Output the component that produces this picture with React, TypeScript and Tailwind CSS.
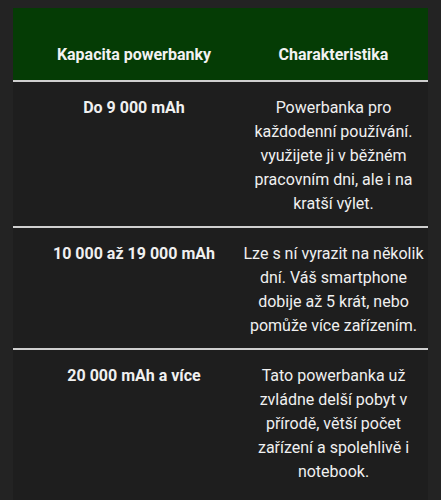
import React from "react";

const rows = [
  {
    cap: "Do 9 000 mAh",
    desc: ["Powerbanka pro", "každodenní používání.", "využijete ji v běžném", "pracovním dni, ale i na", "kratší výlet."],
  },
  {
    cap: "10 000 až 19 000 mAh",
    desc: ["Lze s ní vyrazit na několik", "dní. Váš smartphone", "dobije až 5 krát, nebo", "pomůže více zařízením."],
  },
  {
    cap: "20 000 mAh a více",
    desc: ["Tato powerbanka už", "zvládne delší pobyt v", "přírodě, větší počet", "zařízení a spolehlivě i", "notebook."],
  },
];

export default function App() {
  return (
    <div
      className="w-[441px] h-[500px] overflow-hidden bg-[#232323] pt-[8px] px-[13px]"
      style={{ fontFamily: "Roboto, 'Noto Sans', sans-serif" }}
    >
      <div className="w-[415px] bg-[#1e1e1e] text-[16px] leading-[24px] text-[#f0f0f0]">
        <div className="grid grid-cols-[230px_185px] bg-[#053c05] border-b-2 border-[#cfcfcf] pt-[35px] pb-[13px] font-bold text-[#f2f2f2]">
          <div className="text-center pl-[12px]">Kapacita powerbanky</div>
          <div className="text-center pr-[4px]">Charakteristika</div>
        </div>
        {rows.map((r, i) => (
          <div
            key={i}
            className={
              i < rows.length - 1
                ? "grid grid-cols-[230px_185px] pt-[14px] pb-[10px] border-b-2 border-[#cfcfcf]"
                : "grid grid-cols-[230px_185px] pt-[14px] pb-[16px]"
            }
          >
            <div className="text-center pl-[12px] font-bold">{r.cap}</div>
            <div className="text-center pr-[4px] whitespace-nowrap">
              {r.desc.map((l, j) => (
                <div key={j}>{l}</div>
              ))}
            </div>
          </div>
        ))}
      </div>
    </div>
  );
}
